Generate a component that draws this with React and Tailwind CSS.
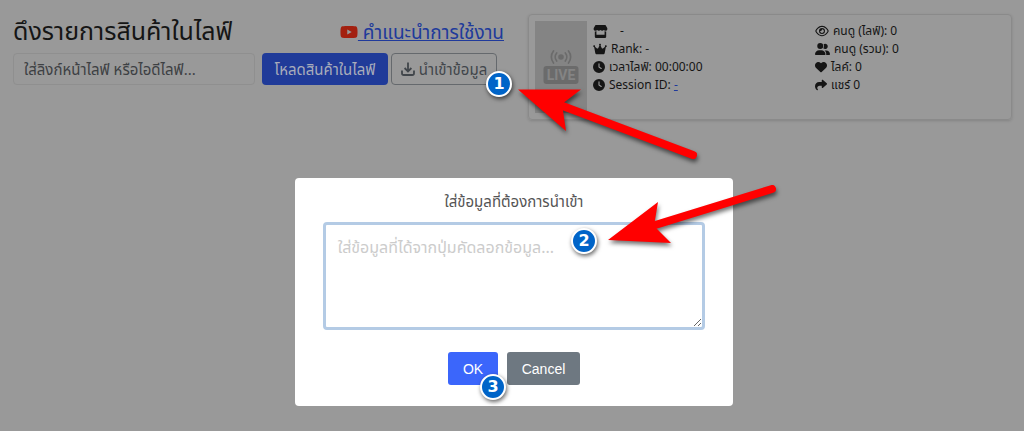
import React, { useState } from "react";
import { FaClock, FaCrown, FaHeart, FaRegEye, FaShare, FaStore, FaUserGroup, FaYoutube } from "react-icons/fa6";

function DownloadIcon() {
  return (
    <svg viewBox="0 0 14 14" className="h-[14px] w-[14px] shrink-0" fill="none" stroke="currentColor" strokeWidth="1.8">
      <path d="M7 0.5v8.6M3.6 6 7 9.4 10.4 6" />
      <path d="M1 8.6v2.6Q1 13 2.8 13h8.4q1.8 0 1.8-1.8V8.6" />
    </svg>
  );
}

function LiveCover() {
  return (
    <div className="flex w-[52px] shrink-0 items-center justify-center bg-[#848484]">
      <svg viewBox="0 0 36 36" className="h-9 w-9" role="img" aria-label="LIVE">
        <circle cx="18" cy="8" r="2.8" fill="#6b6b6b" />
        <g fill="none" stroke="#6b6b6b" strokeWidth="1.7" strokeLinecap="round">
          <path d="M13.7 4a6.2 6.2 0 0 0 0 8M22.3 4a6.2 6.2 0 0 1 0 8" />
          <path d="M10.5 2a9.5 9.5 0 0 0 0 12M25.5 2a9.5 9.5 0 0 1 0 12" />
        </g>
        <rect x="0.5" y="17" width="35" height="18" rx="3" fill="#6b6b6b" />
        <text x="18" y="31" textAnchor="middle" fontSize="14" fontWeight="700" fill="#848484" fontFamily="Roboto, sans-serif">
          LIVE
        </text>
      </svg>
    </div>
  );
}

function Stat({ icon, children }) {
  return (
    <li className="flex items-center gap-1 whitespace-nowrap">
      {icon}
      <span>{children}</span>
    </li>
  );
}

function Marker({ number, className }) {
  return (
    <span
      className={`absolute flex h-[26px] w-[26px] items-center justify-center rounded-full border-2 border-white bg-[#0064c8] font-['DejaVu_Sans',sans-serif] text-base leading-none font-bold text-white shadow-[1px_2px_4px_rgba(0,0,0,0.6)] ${className}`}
    >
      {number}
    </span>
  );
}

function Arrow({ head, line, ...props }) {
  return (
    <svg fill="#ff0000" stroke="#ff0000" {...props}>
      <path d={head} stroke="none" />
      <path d={line} strokeWidth="8" strokeLinecap="round" />
    </svg>
  );
}

function App() {
  const [liveUrl, setLiveUrl] = useState("");
  const [importText, setImportText] = useState("");

  return (
    <div className="font-['Noto_Sans','Noto_Sans_Thai',sans-serif] text-[#151515]">
      <main className="flex min-h-screen items-start gap-6 bg-[#999999] px-3 pt-[14px]">
        <section className="min-w-0 flex-1 pl-px">
          <div className="flex h-[39px] items-start justify-between">
            <h1 className="text-[25px] leading-8 whitespace-nowrap">ดึงรายการสินค้าในไลฟ์</h1>
            <a href="#guide" className="flex items-center text-[19px] leading-9 whitespace-nowrap text-[#203a9b] underline">
              <FaYoutube className="h-[18px] w-[18px] text-[#a3200f]" />
              <span className="whitespace-pre"> คำแนะนำการใช้งาน</span>
            </a>
          </div>
          <form className="flex h-8 pr-[7px] text-[15px]" onSubmit={(e) => e.preventDefault()}>
            <input
              type="text"
              aria-label="ลิงก์หน้าไลฟ์"
              placeholder="ใส่ลิงก์หน้าไลฟ์ หรือไอดีไลฟ์..."
              className="mr-[7px] min-w-0 flex-1 rounded border border-[#8f8f8f] px-[10px] placeholder:text-[#3d4043]"
              value={liveUrl}
              onChange={(e) => setLiveUrl(e.target.value)}
            />
            <button type="submit" className="mr-[3px] w-[126px] shrink-0 rounded bg-[#203b99] whitespace-nowrap text-[#a9adbb]">
              โหลดสินค้าในไลฟ์
            </button>
            <button
              type="button"
              className="flex w-[106px] shrink-0 items-center justify-center gap-1 rounded border border-[#65696d] whitespace-nowrap text-[#41464b]"
            >
              <DownloadIcon />
              นำเข้าข้อมูล
            </button>
          </form>
        </section>

        <section className="flex h-[106px] w-[49%] max-w-[484px] shrink-0 rounded border border-[#8a8a8a] p-[6px] shadow-[0_1px_3px_rgba(0,0,0,0.15)]">
          <LiveCover />
          <div className="ml-[6px] grid flex-1 grid-cols-[222fr_190fr] text-xs leading-[18px]">
            <ul className="pt-px">
              <Stat icon={<FaStore className="h-[13px] w-[15px]" />}>
                <span className="ml-2">-</span>
              </Stat>
              <Stat icon={<FaCrown className="h-3 w-[14px]" />}>Rank: -</Stat>
              <Stat icon={<FaClock className="h-3 w-3" />}>เวลาไลฟ์: 00:00:00</Stat>
              <Stat icon={<FaClock className="h-3 w-3" />}>
                Session ID: <a href="#session" className="text-[#203a9b] underline">-</a>
              </Stat>
            </ul>
            <ul className="pt-px">
              <Stat icon={<FaRegEye className="h-3 w-[14px]" />}>คนดู (ไลฟ์): 0</Stat>
              <Stat icon={<FaUserGroup className="h-3 w-[15px]" />}>คนดู (รวม): 0</Stat>
              <Stat icon={<FaHeart className="h-3 w-3" />}>ไลค์: 0</Stat>
              <Stat icon={<FaShare className="h-3 w-3" />}>แชร์ 0</Stat>
            </ul>
          </div>
        </section>
      </main>

      <div className="absolute inset-x-0 top-[178px] flex justify-center pl-1">
        <div role="dialog" aria-labelledby="import-title" className="w-[43%] rounded bg-white px-7 pt-3 pb-[21px]">
          <label id="import-title" htmlFor="import-data" className="block text-center text-[15px] leading-[22px] text-[#545454]">
            ใส่ข้อมูลที่ต้องการนำเข้า
          </label>
          <textarea
            id="import-data"
            placeholder="ใส่ข้อมูลที่ได้จากปุ่มคัดลอกข้อมูล..."
            className="mt-[10px] block h-[108px] w-full resize rounded border-[3px] border-[#b4cbe5] px-3 py-[10px] text-base leading-6 outline-none placeholder:text-[#cccccc]"
            value={importText}
            onChange={(e) => setImportText(e.target.value)}
          />
          <div className="mt-[22px] flex justify-center gap-[9px] font-['Liberation_Sans',sans-serif] text-sm text-white">
            <button type="button" className="h-[33px] w-[50px] rounded-[3px] bg-[#3b66fb]">OK</button>
            <button type="button" className="h-[33px] w-[73px] rounded-[3px] bg-[#6e7881]">Cancel</button>
          </div>
        </div>
      </div>

      <Marker number={1} className="top-[71px] left-[486px]" />
      <Marker number={2} className="top-[228px] left-[571px]" />
      <Marker number={3} className="top-[374px] left-[480px]" />

      <Arrow
        viewBox="0 0 190 84"
        className="pointer-events-none absolute top-[84px] left-[514px] h-[84px] w-[190px] drop-shadow-[1px_3px_2px_rgba(0,0,0,0.55)]"
        head="M4 5.5H67L48 20 52 47Z"
        line="M46 21 179 71"
      />
      <Arrow
        viewBox="0 0 180 70"
        className="pointer-events-none absolute top-[182px] left-[604px] h-[70px] w-[180px] drop-shadow-[1px_3px_2px_rgba(0,0,0,0.55)]"
        head="M4 58 54 20 50 44 67 61Z"
        line="M48 44 168 7"
      />
    </div>
  );
}

export default App;
